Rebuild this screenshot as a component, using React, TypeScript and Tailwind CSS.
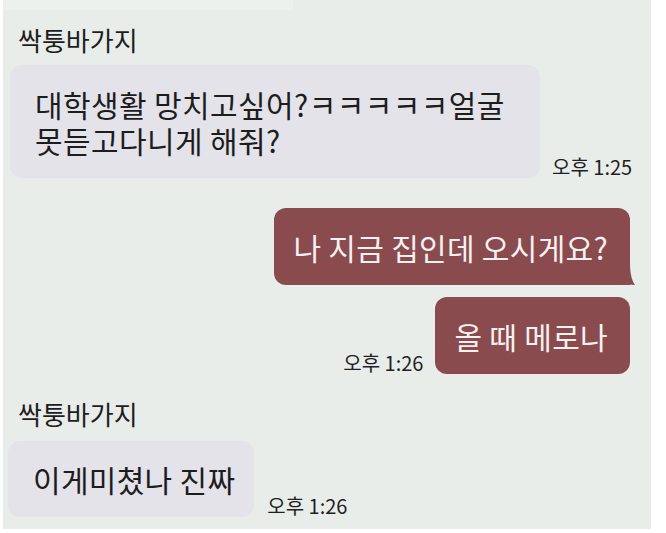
const font = { fontFamily: '"Noto Sans CJK KR", "Noto Sans", sans-serif' }

const Time = ({ t }: { t: string }) => (
  <span className="text-[20px] leading-[22px] text-[#1f1f1f] whitespace-nowrap">{t}</span>
)

const Name = ({ className }: { className: string }) => (
  <p className={`ml-[15px] text-[26px] leading-[30px] text-[#1d1d1d] ${className}`}>싹퉁바가지</p>
)

export default function App() {
  return (
    <div className="w-[666px] h-[533px] bg-white overflow-hidden" style={font}>
      <div className="ml-[3px] w-[648px] h-[529px] bg-[#e8edea] flex flex-col">
        <div className="h-[10px] w-[290px] bg-[#edf1ee]" />

        <Name className="mt-[15px]" />

        {/* received 1 */}
        <div className="mt-[10px] ml-[7px] flex items-end gap-[12px]">
          <div className="w-[530px] rounded-[12px] bg-[#e4e3ea] pl-[25px] pr-[5px] pt-[21px] pb-[20px] text-[30px] leading-[36px] tracking-[0.4px] text-[#1d1d1d]">
            대학생활 망치고싶어?ㅋㅋㅋㅋㅋ얼굴
            <br />
            못듣고다니게 해줘?
          </div>
          <Time t="오후 1:25" />
        </div>

        {/* sent 1 */}
        <div className="mt-[30px] pr-[21px] flex justify-end">
          <div className="relative rounded-[12px] rounded-br-none bg-[#8a4b4e] pl-[19px] pr-[22px] pt-[21px] pb-[20px] text-[30px] leading-[36px] tracking-[0.3px] text-[#f7f1f1]">
            나 지금 집인데 오시게요?
            <svg className="absolute right-[-6px] bottom-0" width="14" height="22" viewBox="0 0 14 22">
              <path d="M0 0 L8 0 C8 8 9 16 13 22 C8 22 3 21 0 19 Z" fill="#8a4b4e" />
            </svg>
          </div>
        </div>

        {/* sent 2 */}
        <div className="mt-[12px] pr-[21px] flex justify-end items-end gap-[12px]">
          <Time t="오후 1:26" />
          <div className="rounded-[12px] bg-[#8a4b4e] pl-[19px] pr-[22px] pt-[21px] pb-[20px] text-[30px] leading-[36px] tracking-[0.3px] text-[#f7f1f1]">
            올 때 메로나
          </div>
        </div>

        <Name className="mt-[25px]" />

        {/* received 2 */}
        <div className="mt-[12px] ml-[5px] flex items-end gap-[13px]">
          <div className="rounded-[12px] bg-[#e4e3ea] pl-[25px] pr-[19px] pt-[20px] pb-[20px] text-[30px] leading-[36px] tracking-[0.3px] text-[#1d1d1d]">
            이게미쳤나 진짜
          </div>
          <Time t="오후 1:26" />
        </div>
      </div>
    </div>
  )
}
